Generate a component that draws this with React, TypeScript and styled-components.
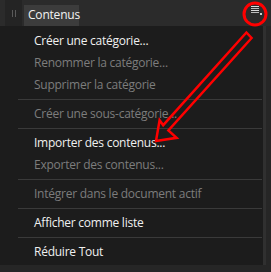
import React from 'react';
import styled, { createGlobalStyle } from 'styled-components';

type Entry = { label: string; disabled?: boolean } | 'sep';

const entries: Entry[] = [
  { label: 'Créer une catégorie...' },
  { label: 'Renommer la catégorie...', disabled: true },
  { label: 'Supprimer la catégorie', disabled: true },
  'sep',
  { label: 'Créer une sous-catégorie...', disabled: true },
  'sep',
  { label: 'Importer des contenus...' },
  { label: 'Exporter des contenus...', disabled: true },
  'sep',
  { label: 'Intégrer dans le document actif', disabled: true },
  'sep',
  { label: 'Afficher comme liste' },
  'sep',
  { label: 'Réduire Tout' },
];

export default function App() {
  return (
    <>
      <GlobalStyle />
      <Frame>
        <Header>
          <Grip>
            <GripBar />
            <GripBar />
          </Grip>
          <Tab>Contenus</Tab>
          <Spacer />
          <MenuButton aria-label="menu">
            <svg width="12" height="12" viewBox="0 0 12 12">
              <rect x="1" y="2" width="8" height="1" fill="#d8d8d8" />
              <rect x="1" y="4" width="8" height="1" fill="#bdbdbd" />
              <rect x="1" y="6" width="8" height="1" fill="#d8d8d8" />
              <rect x="1" y="8" width="8" height="1" fill="#bdbdbd" />
              <rect x="10" y="9" width="2" height="2" fill="#cfcfcf" />
            </svg>
          </MenuButton>
        </Header>
        <Body>
          <Menu>
            {entries.map((e, i) =>
              e === 'sep' ? (
                <Separator key={i} />
              ) : (
                <Item key={i} $disabled={e.disabled}>
                  {e.label}
                </Item>
              ),
            )}
          </Menu>
          <ScrollStrip />
        </Body>
        <Footer />
        {/* red annotation drawn on top of the screenshot */}
        <Annotation width="271" height="272" viewBox="0 0 271 272">
          <circle cx="255" cy="14" r="11" fill="none" stroke="#f00" strokeWidth="3" />
          <polygon
            points="251.6,38.0 168.4,130.5 176.6,137.8 156,141 159.6,120.2 163.2,125.2 246.4,32.5"
            fill="none"
            stroke="#f00"
            strokeWidth="2.5"
            strokeLinejoin="miter"
          />
        </Annotation>
      </Frame>
    </>
  );
}

const GlobalStyle = createGlobalStyle`
  html, body {
    margin: 0;
    padding: 0;
    background: #1c1c1c;
  }
`;

const Frame = styled.div`
  position: relative;
  width: 271px;
  height: 272px;
  display: flex;
  flex-direction: column;
  overflow: hidden;
  font-family: 'Open Sans', 'Noto Sans', sans-serif;
  background: #1c1c1c;
`;

const Header = styled.div`
  height: 26px;
  display: flex;
  align-items: flex-end;
  background: #2b2b2b;
  flex-shrink: 0;
`;

const Grip = styled.div`
  width: 17px;
  height: 26px;
  margin-left: 5px;
  margin-right: 2px;
  background: #242424;
  display: flex;
  align-items: center;
  justify-content: center;
  gap: 2px;
`;

const GripBar = styled.div`
  width: 1px;
  height: 7px;
  background: #5a5a5a;
`;

const Tab = styled.div`
  height: 21px;
  width: 55px;
  box-sizing: border-box;
  padding-left: 4px;
  background: #3c3c3c;
  color: #f2f2f2;
  font-size: 12px;
  letter-spacing: -0.2px;
  line-height: 20px;
`;

const Spacer = styled.div`
  flex: 1;
`;

const MenuButton = styled.div`
  width: 12px;
  height: 12px;
  margin: 0 9px 7px 0;
  align-self: center;
  display: flex;
`;

const Body = styled.div`
  flex: 1;
  display: flex;
  min-height: 0;
`;

const Menu = styled.div`
  width: 263px;
  box-sizing: border-box;
  padding: 4px 0 2px;
  display: flex;
  flex-direction: column;
  background: #1c1c1c;
`;

const Item = styled.div<{ $disabled?: boolean }>`
  height: 22px;
  line-height: 22px;
  padding-left: 34px;
  font-size: 12px;
  letter-spacing: -0.25px;
  white-space: nowrap;
  color: ${p => (p.$disabled ? '#7d7d7d' : '#f0f0f0')};
`;

const Separator = styled.div`
  height: 1px;
  margin: 3px 1px 3px 18px;
  background: #3a3a3a;
`;

const ScrollStrip = styled.div`
  width: 8px;
  background: linear-gradient(to right, #303030 0 3px, #262626 3px);
`;

const Footer = styled.div`
  height: 7px;
  flex-shrink: 0;
  background: #262626;
`;

const Annotation = styled.svg`
  position: absolute;
  left: 0;
  top: 0;
  pointer-events: none;
`;
